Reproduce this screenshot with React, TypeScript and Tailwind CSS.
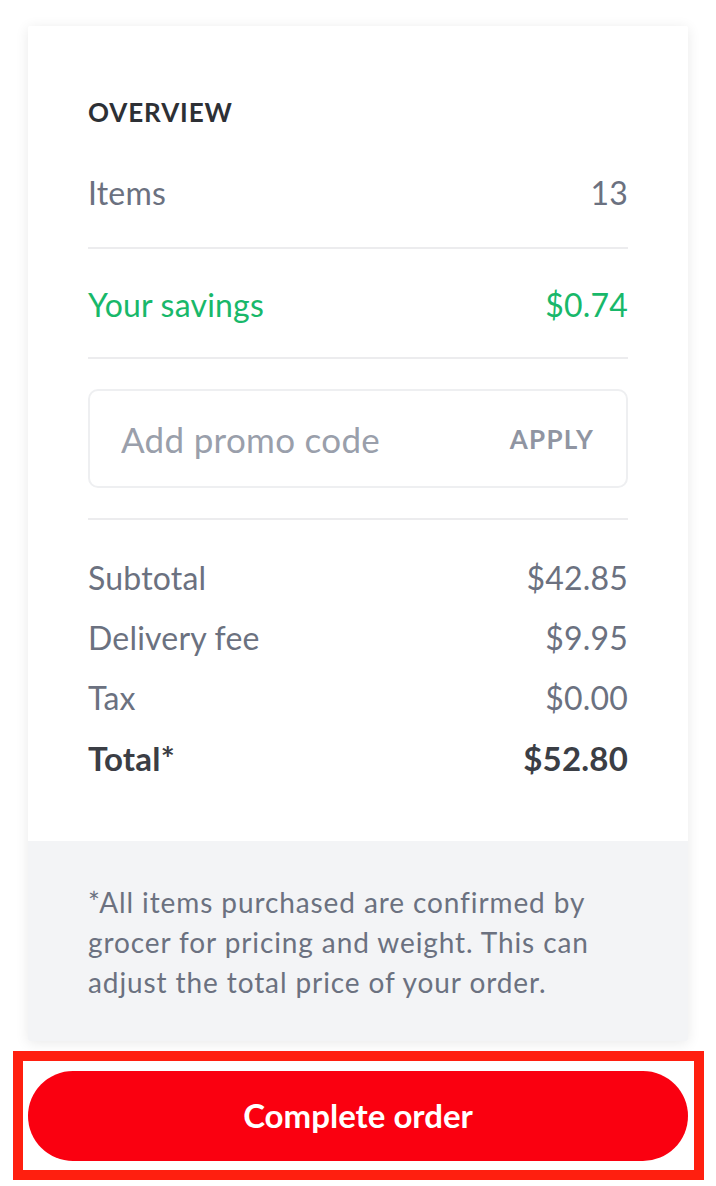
import React from 'react';

const Row = ({ label, value, bold = false }: { label: string; value: string; bold?: boolean }) => (
  <div className={`flex h-[60px] items-center justify-between ${bold ? 'text-[33px] font-bold text-[#3b3e45]' : 'text-[#6b7180]'}`}>
    <span>{label}</span>
    <span>{value}</span>
  </div>
);

const App = () => {
  return (
    <div className="min-h-screen bg-white pt-[26px] font-['Lato','Noto_Sans',sans-serif]">
      {/* Summary card */}
      <div className="mx-[28px] w-[660px] overflow-hidden rounded-[2px] bg-white shadow-[0_2px_14px_rgba(0,0,0,0.09)]">
        <div className="px-[60px] pb-[53px] pt-[70px] text-[32px] leading-[40px] tracking-[0.2px]">
          <h2 className="text-[26px] font-bold leading-[32px] tracking-[0.9px] text-[#2d3035]">OVERVIEW</h2>

          <div className="mt-[45px] flex items-center justify-between text-[#6b7180]">
            <span>Items</span>
            <span>13</span>
          </div>
          <div className="mt-[34px] h-[2px] bg-[#ececee]" />

          <div className="mt-[36px] flex items-center justify-between text-[#18b86a]">
            <span>Your savings</span>
            <span>$0.74</span>
          </div>
          <div className="mt-[32px] h-[2px] bg-[#ececee]" />

          <div className="mt-[30px] flex h-[99px] items-center justify-between rounded-[10px] border-2 border-[#eeeff1] pl-[31px] pr-[32px]">
            <input
              type="text"
              placeholder="Add promo code"
              className="w-[330px] bg-transparent text-[35px] tracking-[0.3px] text-[#9a9fab] outline-none placeholder:text-[#9a9fab]"
            />
            <button className="text-[26px] font-bold tracking-[1.2px] text-[#9095a2]">APPLY</button>
          </div>
          <div className="mt-[30px] h-[2px] bg-[#ececee]" />

          <div className="mt-[28px]">
            <Row label="Subtotal" value="$42.85" />
            <Row label="Delivery fee" value="$9.95" />
            <Row label="Tax" value="$0.00" />
            <Row label="Total*" value="$52.80" bold />
          </div>
        </div>

        <div className="bg-[#f3f4f6] px-[60px] pb-[39px] pt-[41px] text-[28px] leading-[40px] tracking-[0.9px] text-[#6b7180]">
          *All items purchased are confirmed by grocer for pricing and weight. This can adjust the total price of your order.
        </div>
      </div>

      {/* Highlighted action */}
      <div className="ml-[13px] mt-[10px] w-[691px] border-[10px] border-[#ff1f0f] bg-white pb-[9px] pl-[5px] pr-[6px] pt-[10px]">
        <button className="flex h-[90px] w-[660px] items-center justify-center rounded-full bg-[#fa0010] text-[33px] font-bold text-white">
          Complete order
        </button>
      </div>
    </div>
  );
};

export default App;
